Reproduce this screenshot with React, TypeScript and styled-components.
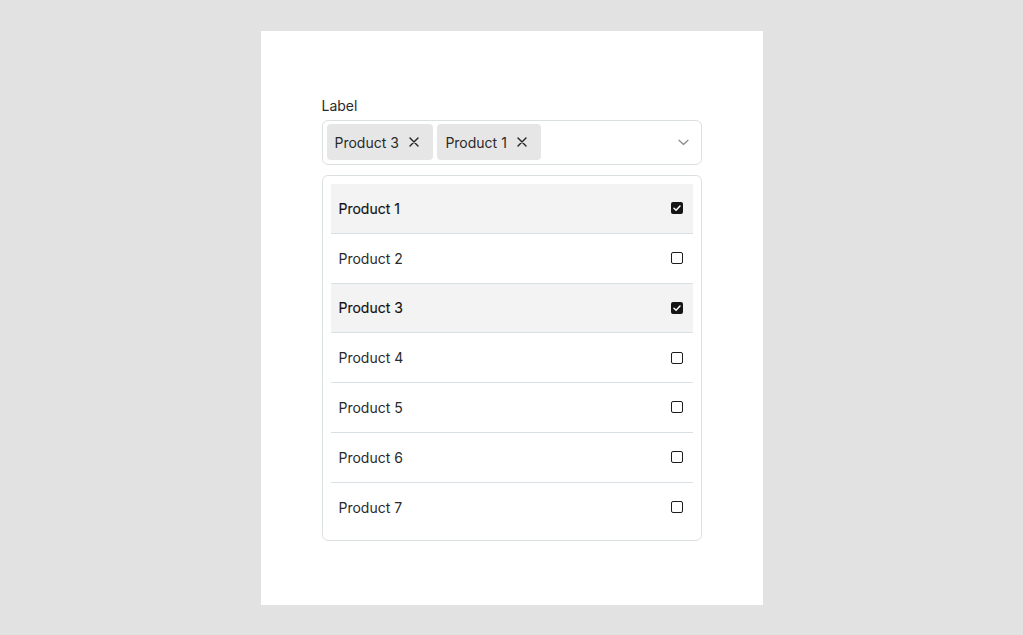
import React, { useState } from 'react'
import styled, { createGlobalStyle } from 'styled-components'

const GlobalStyle = createGlobalStyle`
  html, body {
    margin: 0;
    padding: 0;
    background: #e2e2e2;
    font-family: Inter, "Noto Sans", "Liberation Sans", sans-serif;
    color: #1c1c1c;
  }
  * {
    box-sizing: border-box;
  }
`

const Page = styled.div`
  display: flex;
  align-items: center;
  justify-content: center;
  min-height: 100vh;
  padding-top: 1px;
`

const Panel = styled.div`
  background: #ffffff;
  width: 502px;
  padding: 64px 61px;
`

const FieldLabel = styled.div`
  font-size: 14px;
  line-height: 21px;
  margin-bottom: 4px;
  color: #2a2a2a;
`

const SelectBox = styled.div`
  display: flex;
  align-items: center;
  gap: 4px;
  height: 45px;
  padding: 3px 12px 4px 4px;
  border: 1px solid #dbe0e3;
  border-radius: 6px;
`

const Chip = styled.div`
  display: flex;
  align-items: center;
  gap: 8.5px;
  height: 36px;
  padding: 0 12px 0 8px;
  background: #e6e6e6;
  border-radius: 4px;
  font-size: 14px;
  color: #2a2a2a;
`

const ChipRemove = styled.button`
  display: flex;
  align-items: center;
  justify-content: center;
  width: 14px;
  height: 14px;
  padding: 0;
  border: 0;
  background: none;
  color: #222;
  cursor: pointer;
`

const Spacer = styled.div`
  flex: 1;
`

const Chevron = styled.span`
  display: flex;
  color: #8a8a8a;
`

const Dropdown = styled.div`
  margin-top: 10px;
  padding: 8px;
  border: 1px solid #dbe0e3;
  border-radius: 6px;
`

const Option = styled.div<{ $selected: boolean; $last: boolean }>`
  display: flex;
  align-items: center;
  justify-content: space-between;
  height: ${({ $last }) => ($last ? '49.5px' : '49.75px')};
  padding: 0 10px 0 8px;
  background: ${({ $selected }) => ($selected ? '#f3f3f3' : '#ffffff')};
  border-bottom: ${({ $last }) => ($last ? 'none' : '1px solid #d9e0e3')};
  font-size: 14px;
  color: ${({ $selected }) => ($selected ? '#111111' : '#2a2a2a')};
  -webkit-text-stroke: ${({ $selected }) => ($selected ? '0.15px #111111' : '0')};
  cursor: pointer;
`

const Box = styled.span<{ $checked: boolean }>`
  display: flex;
  align-items: center;
  justify-content: center;
  width: 12px;
  height: 12px;
  border-radius: 2px;
  background: ${({ $checked }) => ($checked ? '#151515' : 'transparent')};
  border: ${({ $checked }) => ($checked ? 'none' : '1.5px solid #1c1c1c')};
`

const XIcon = () => (
  <svg width="12" height="12" viewBox="0 0 12 12" fill="none">
    <path d="M2 2L10 10M10 2L2 10" stroke="currentColor" strokeWidth="1.4" strokeLinecap="round" />
  </svg>
)

const ChevronIcon = () => (
  <svg width="11" height="7" viewBox="0 0 11 7" fill="none">
    <path d="M1 1.2L5.5 5.5L10 1.2" stroke="currentColor" strokeWidth="1.2" strokeLinecap="round" strokeLinejoin="round" />
  </svg>
)

const CheckIcon = () => (
  <svg width="10" height="10" viewBox="0 0 10 10" fill="none">
    <path d="M2 5.2L4.1 7.2L8 3" stroke="#ffffff" strokeWidth="1.5" strokeLinecap="round" strokeLinejoin="round" />
  </svg>
)

const products = ['Product 1', 'Product 2', 'Product 3', 'Product 4', 'Product 5', 'Product 6', 'Product 7']

const App = () => {
  const [selected, setSelected] = useState<string[]>(['Product 3', 'Product 1'])

  const toggle = (p: string) => {
    setSelected(s => (s.includes(p) ? s.filter(x => x !== p) : [...s, p]))
  }

  return (
    <Page>
      <GlobalStyle />
      <Panel>
        <FieldLabel>Label</FieldLabel>
        <SelectBox>
          {selected.map(p => (
            <Chip key={p}>
              {p}
              <ChipRemove onClick={() => toggle(p)} aria-label={`Remove ${p}`}>
                <XIcon />
              </ChipRemove>
            </Chip>
          ))}
          <Spacer />
          <Chevron>
            <ChevronIcon />
          </Chevron>
        </SelectBox>
        <Dropdown>
          {products.map((p, i) => {
            const checked = selected.includes(p)
            return (
              <Option key={p} $selected={checked} $last={i === products.length - 1} onClick={() => toggle(p)}>
                {p}
                <Box $checked={checked}>{checked ? <CheckIcon /> : null}</Box>
              </Option>
            )
          })}
        </Dropdown>
      </Panel>
    </Page>
  )
}

export default App
